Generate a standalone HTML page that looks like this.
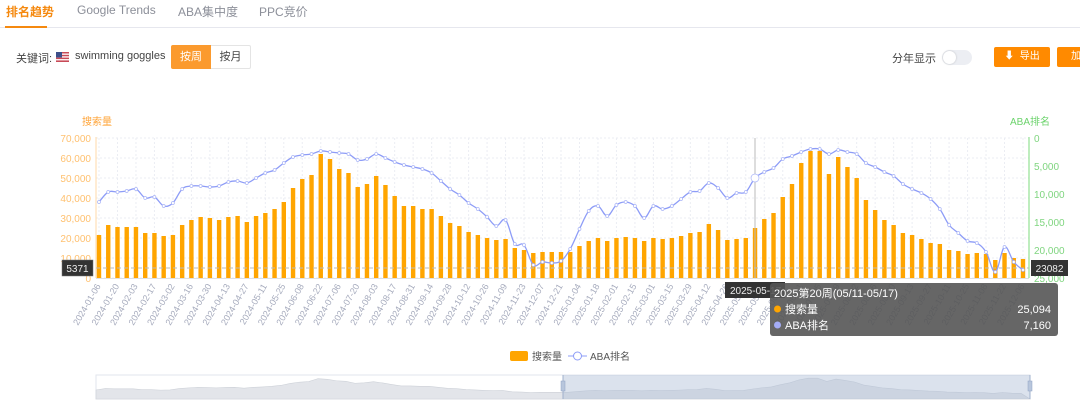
<!DOCTYPE html>
<html><head><meta charset="utf-8"><style>
*{margin:0;padding:0;box-sizing:border-box}
body{width:1080px;height:404px;background:#fff;font-family:"Liberation Sans","Noto Sans CJK SC",sans-serif;position:relative;overflow:hidden;color:#333}
.a{position:absolute;white-space:nowrap}
.tab{font-size:12px;color:#8c8f99;top:3px}
.btn{position:absolute;height:22px;font-size:11px;line-height:22px;text-align:center}
</style></head><body>
<div class="a tab" style="left:6px;color:#f5890f;font-weight:bold">排名趋势</div>
<div class="a tab" style="left:77px">Google Trends</div>
<div class="a tab" style="left:178px">ABA集中度</div>
<div class="a tab" style="left:259px">PPC竞价</div>
<div class="a" style="left:0;top:27px;width:1080px;height:1px;background:#e6e7ee"></div>
<div class="a" style="left:5px;top:26px;width:42px;height:2px;background:#f5890f"></div>

<div class="a" style="left:16px;top:50px;font-size:11px;color:#444">关键词:</div>
<svg class="a" style="left:56px;top:52px" width="13" height="10"><rect width="13" height="10" fill="#c84a57"/><rect y="1.5" width="13" height="1.3" fill="#fff"/><rect y="4.3" width="13" height="1.3" fill="#fff"/><rect y="7.1" width="13" height="1.3" fill="#fff"/><rect width="6" height="5.5" fill="#3d4f8a"/></svg>
<div class="a" style="left:75px;top:50px;font-size:11px;color:#444">swimming goggles</div>
<div class="btn" style="left:171px;top:45px;width:40px;background:#fb9a2e;color:#fff;border-radius:2px 0 0 2px;height:24px;line-height:24px">按周</div>
<div class="btn" style="left:211px;top:45px;width:40px;border:1px solid #e4e4e4;border-left:none;color:#444;height:24px;line-height:22px;border-radius:0 2px 2px 0">按月</div>

<div class="a" style="left:892px;top:50px;font-size:11px;color:#444">分年显示</div>
<div class="a" style="left:942px;top:50px;width:30px;height:15px;border-radius:8px;background:#eceef3"></div>
<div class="a" style="left:943px;top:51px;width:13px;height:13px;border-radius:50%;background:#fff;box-shadow:0 0 2px rgba(0,0,0,.2)"></div>
<div class="btn" style="left:994px;top:47px;width:56px;background:#ff8a00;color:#fff;border-radius:2px;height:20px;line-height:20px;font-size:10px">⬇&nbsp; 导出</div>
<div class="btn" style="left:1057px;top:47px;width:30px;background:#ff8a00;color:#fff;border-radius:2px;height:20px;line-height:20px;text-align:left;padding-left:14px;font-size:10px">加</div>

<svg class="a" style="left:0;top:0" width="1080" height="404" id="ch">
<g font-size="10" fill="#ffc170" text-anchor="end">
<text x="91" y="142">70,000</text><text x="91" y="162">60,000</text><text x="91" y="182">50,000</text><text x="91" y="202">40,000</text><text x="91" y="222">30,000</text><text x="91" y="242">20,000</text><text x="91" y="262">10,000</text><text x="91" y="282">0</text>
</g>
<text x="82" y="125" font-size="10" fill="#ffa53a">搜索量</text>
<text x="1010" y="125" font-size="10" fill="#6cd36c">ABA排名</text>
<g font-size="10" fill="#7fd57f">
<text x="1034" y="142">0</text><text x="1034" y="170">5,000</text><text x="1034" y="198">10,000</text><text x="1034" y="226">15,000</text><text x="1034" y="254">20,000</text><text x="1034" y="282">25,000</text>
</g>
<g id="grid" stroke="#ebedf3" stroke-dasharray="2,2"></g>
<line x1="96" y1="137" x2="96" y2="278" stroke="#ffd9a8"/>
<line x1="1029" y1="137" x2="1029" y2="278" stroke="#7ddb7d"/>
<line x1="96" y1="278.5" x2="1029" y2="278.5" stroke="#e0e0e0"/>
<g id="bars" fill="#ffa500"></g>
<line x1="96" y1="268" x2="1029" y2="268" stroke="#bbb" stroke-dasharray="4,3"/>
<line x1="755" y1="138" x2="755" y2="278" stroke="#bbb"/>
<path id="ln" fill="none" stroke="#8d9cf7" stroke-width="1.3"/>
<g id="dots" fill="#fff" stroke="#a9b4f7" stroke-width="0.7"></g>
<g font-size="9" fill="#a6abbd" id="xl">
<text transform="translate(101,286) rotate(-60)" text-anchor="end">2024-01-06</text>
<text transform="translate(119.5,286) rotate(-60)" text-anchor="end">2024-01-20</text>
<text transform="translate(138,286) rotate(-60)" text-anchor="end">2024-02-03</text>
<text transform="translate(156.5,286) rotate(-60)" text-anchor="end">2024-02-17</text>
<text transform="translate(175,286) rotate(-60)" text-anchor="end">2024-03-02</text>
<text transform="translate(193.4,286) rotate(-60)" text-anchor="end">2024-03-16</text>
<text transform="translate(211.9,286) rotate(-60)" text-anchor="end">2024-03-30</text>
<text transform="translate(230.4,286) rotate(-60)" text-anchor="end">2024-04-13</text>
<text transform="translate(248.9,286) rotate(-60)" text-anchor="end">2024-04-27</text>
<text transform="translate(267.3,286) rotate(-60)" text-anchor="end">2024-05-11</text>
<text transform="translate(285.8,286) rotate(-60)" text-anchor="end">2024-05-25</text>
<text transform="translate(304.3,286) rotate(-60)" text-anchor="end">2024-06-08</text>
<text transform="translate(322.8,286) rotate(-60)" text-anchor="end">2024-06-22</text>
<text transform="translate(341.2,286) rotate(-60)" text-anchor="end">2024-07-06</text>
<text transform="translate(359.7,286) rotate(-60)" text-anchor="end">2024-07-20</text>
<text transform="translate(378.2,286) rotate(-60)" text-anchor="end">2024-08-03</text>
<text transform="translate(396.7,286) rotate(-60)" text-anchor="end">2024-08-17</text>
<text transform="translate(415.2,286) rotate(-60)" text-anchor="end">2024-08-31</text>
<text transform="translate(433.6,286) rotate(-60)" text-anchor="end">2024-09-14</text>
<text transform="translate(452.1,286) rotate(-60)" text-anchor="end">2024-09-28</text>
<text transform="translate(470.6,286) rotate(-60)" text-anchor="end">2024-10-12</text>
<text transform="translate(489.1,286) rotate(-60)" text-anchor="end">2024-10-26</text>
<text transform="translate(507.5,286) rotate(-60)" text-anchor="end">2024-11-09</text>
<text transform="translate(526,286) rotate(-60)" text-anchor="end">2024-11-23</text>
<text transform="translate(544.5,286) rotate(-60)" text-anchor="end">2024-12-07</text>
<text transform="translate(563,286) rotate(-60)" text-anchor="end">2024-12-21</text>
<text transform="translate(581.4,286) rotate(-60)" text-anchor="end">2025-01-04</text>
<text transform="translate(599.9,286) rotate(-60)" text-anchor="end">2025-01-18</text>
<text transform="translate(618.4,286) rotate(-60)" text-anchor="end">2025-02-01</text>
<text transform="translate(636.9,286) rotate(-60)" text-anchor="end">2025-02-15</text>
<text transform="translate(655.4,286) rotate(-60)" text-anchor="end">2025-03-01</text>
<text transform="translate(673.8,286) rotate(-60)" text-anchor="end">2025-03-15</text>
<text transform="translate(692.3,286) rotate(-60)" text-anchor="end">2025-03-29</text>
<text transform="translate(710.8,286) rotate(-60)" text-anchor="end">2025-04-12</text>
<text transform="translate(729.3,286) rotate(-60)" text-anchor="end">2025-04-26</text>
<text transform="translate(747.7,286) rotate(-60)" text-anchor="end">2025-05-10</text>
<text transform="translate(766.2,286) rotate(-60)" text-anchor="end">2025-05-24</text>
<text transform="translate(784.7,286) rotate(-60)" text-anchor="end">2025-06-07</text>
<text transform="translate(803.2,286) rotate(-60)" text-anchor="end">2025-06-21</text>
<text transform="translate(821.6,286) rotate(-60)" text-anchor="end">2025-07-05</text>
<text transform="translate(840.1,286) rotate(-60)" text-anchor="end">2025-07-19</text>
<text transform="translate(858.6,286) rotate(-60)" text-anchor="end">2025-08-02</text>
<text transform="translate(877.1,286) rotate(-60)" text-anchor="end">2025-08-16</text>
<text transform="translate(895.6,286) rotate(-60)" text-anchor="end">2025-08-30</text>
<text transform="translate(914,286) rotate(-60)" text-anchor="end">2025-09-13</text>
<text transform="translate(932.5,286) rotate(-60)" text-anchor="end">2025-09-27</text>
<text transform="translate(951,286) rotate(-60)" text-anchor="end">2025-10-11</text>
<text transform="translate(969.5,286) rotate(-60)" text-anchor="end">2025-10-25</text>
<text transform="translate(987.9,286) rotate(-60)" text-anchor="end">2025-11-08</text>
<text transform="translate(1006.4,286) rotate(-60)" text-anchor="end">2025-11-22</text>
<text transform="translate(1024.9,286) rotate(-60)" text-anchor="end">2025-12-06</text>
</g>
<rect x="62" y="260" width="31" height="16" fill="#333" stroke="#777" stroke-width="0.5"/>
<text x="77.5" y="272" font-size="10" fill="#eee" text-anchor="middle">5371</text>
<rect x="1031" y="260" width="37" height="16" fill="#333"/>
<text x="1049.5" y="272" font-size="10" fill="#eee" text-anchor="middle">23082</text>
<rect x="725" y="282" width="60" height="16" fill="#333"/>
<text x="730" y="294" font-size="10" fill="#eee">2025-05-17</text>
<rect x="770" y="283" width="288" height="53" rx="3" fill="rgba(85,85,85,0.9)"/>
<text x="774" y="297" font-size="11" fill="#fff">2025第20周(05/11-05/17)</text>
<circle cx="777.5" cy="309" r="3.5" fill="#ffa500"/>
<text x="785" y="313" font-size="11" fill="#fff">搜索量</text>
<text x="1051" y="313" font-size="11" fill="#fff" text-anchor="end">25,094</text>
<circle cx="777.5" cy="325" r="3.5" fill="#a4acf6"/>
<text x="785" y="329" font-size="11" fill="#fff">ABA排名</text>
<text x="1051" y="329" font-size="11" fill="#fff" text-anchor="end">7,160</text>
<rect x="510" y="351" width="18" height="10" rx="2" fill="#ffa500"/>
<text x="532" y="360" font-size="10" fill="#555">搜索量</text>
<line x1="568" y1="356" x2="587" y2="356" stroke="#8d9cf7"/>
<circle cx="577.5" cy="356" r="4" fill="#fff" stroke="#8d9cf7"/>
<text x="590" y="360" font-size="10" fill="#555">ABA排名</text>
<rect x="96" y="375" width="934" height="24" fill="#fff" stroke="#e2e5ec"/>
<path id="dz" fill="#e3e5ea" stroke="#cdd1d8" stroke-width="0.6"/>
<rect x="563" y="375" width="467" height="24" fill="rgba(175,190,215,0.45)"/>
<line x1="563" y1="375" x2="563" y2="399" stroke="#9fb0cc"/>
<line x1="1030" y1="375" x2="1030" y2="399" stroke="#9fb0cc"/>
<rect x="561" y="381" width="4" height="10" fill="#b8c6dc" stroke="#8fa2c4" stroke-width="0.5"/>
<rect x="1028" y="381" width="4" height="10" fill="#b8c6dc" stroke="#8fa2c4" stroke-width="0.5"/>
</svg>
<script>
var v=[21.5,26.5,25.5,25.5,25.5,22.5,22.5,21,21.5,26.5,29,30.5,30,29,30.5,31,28,31,32.5,34.5,38,45,49.5,51.5,62,
59.5,54.5,52.5,45.5,47,51,46.5,41,36,36,34.5,34.5,31,27.5,26,23,21.5,20,19,19.5,15,14,12.5,13,13,13,13,16,18.5,20,18.5,20,20.5,20,18.5,20,19.5,20,21,22.5,
23,27,24,19,19.5,20,25,29.5,32.5,40.5,47,57.5,63.5,63.5,52,60.5,55.5,50,39,34,29,26.5,22.5,21.5,19.5,17.5,17,14,13.5,12,12.5,12,9,12.5,10,9.5];
var r=[202,192,192,191,189,198,197,206,203,189,186,186,187,186,182,181,183,178,173,170,163,157,155,154,151,152,153,154,160,159,154,158,162,165,167,169,173,181,189,195,203,209,217,226,220,244,245,265,262,263,261,249,229,211,206,216,205,202,206,218,206,209,206,199,192,191,183,188,198,193,192,178,172,168,159,156,152,149,149,154,150,152,154,163,167,172,176,184,189,193,199,209,225,233,241,243,252,272,247,262,270];
var S=9.24,X0=99,b="",d="",dots="",g="",dz="M96,399";
var P=[];for(var i=0;i<r.length;i++)P.push([X0+i*S,r[i]]);
for(var i=0;i<v.length;i++){var x=X0+i*S,h=v[i]*2;b+='<rect x="'+(x-2.2)+'" y="'+(278-h)+'" width="4.4" height="'+h+'"/>';
dots+='<circle cx="'+x.toFixed(1)+'" cy="'+r[i]+'" r="'+(i==71?4:1.5)+'"/>';
dz+="L"+(96+i*9.25)+","+(399-v[i]*0.28-3);}
d="M"+P[0][0]+","+P[0][1];
for(var i=0;i<P.length-1;i++){var p0=P[Math.max(0,i-1)],p1=P[i],p2=P[i+1],p3=P[Math.min(P.length-1,i+2)],t=0.18;
d+="C"+(p1[0]+(p2[0]-p0[0])*t).toFixed(1)+","+(p1[1]+(p2[1]-p0[1])*t).toFixed(1)+" "+(p2[0]-(p3[0]-p1[0])*t).toFixed(1)+","+(p2[1]-(p3[1]-p1[1])*t).toFixed(1)+" "+p2[0].toFixed(1)+","+p2[1];}
dz+="L1030,399Z";
for(var k=0;k<8;k++)g+='<line x1="96" y1="'+(138+k*20)+'" x2="1029" y2="'+(138+k*20)+'"/>';
for(var k=0;k<51;k++){var x=X0+k*18.48;g+='<line x1="'+x+'" y1="138" x2="'+x+'" y2="278"/>';}
document.getElementById("bars").innerHTML=b;document.getElementById("ln").setAttribute("d",d);
document.getElementById("dots").innerHTML=dots;document.getElementById("grid").innerHTML=g;document.getElementById("dz").setAttribute("d",dz);
</script>
</body></html>
